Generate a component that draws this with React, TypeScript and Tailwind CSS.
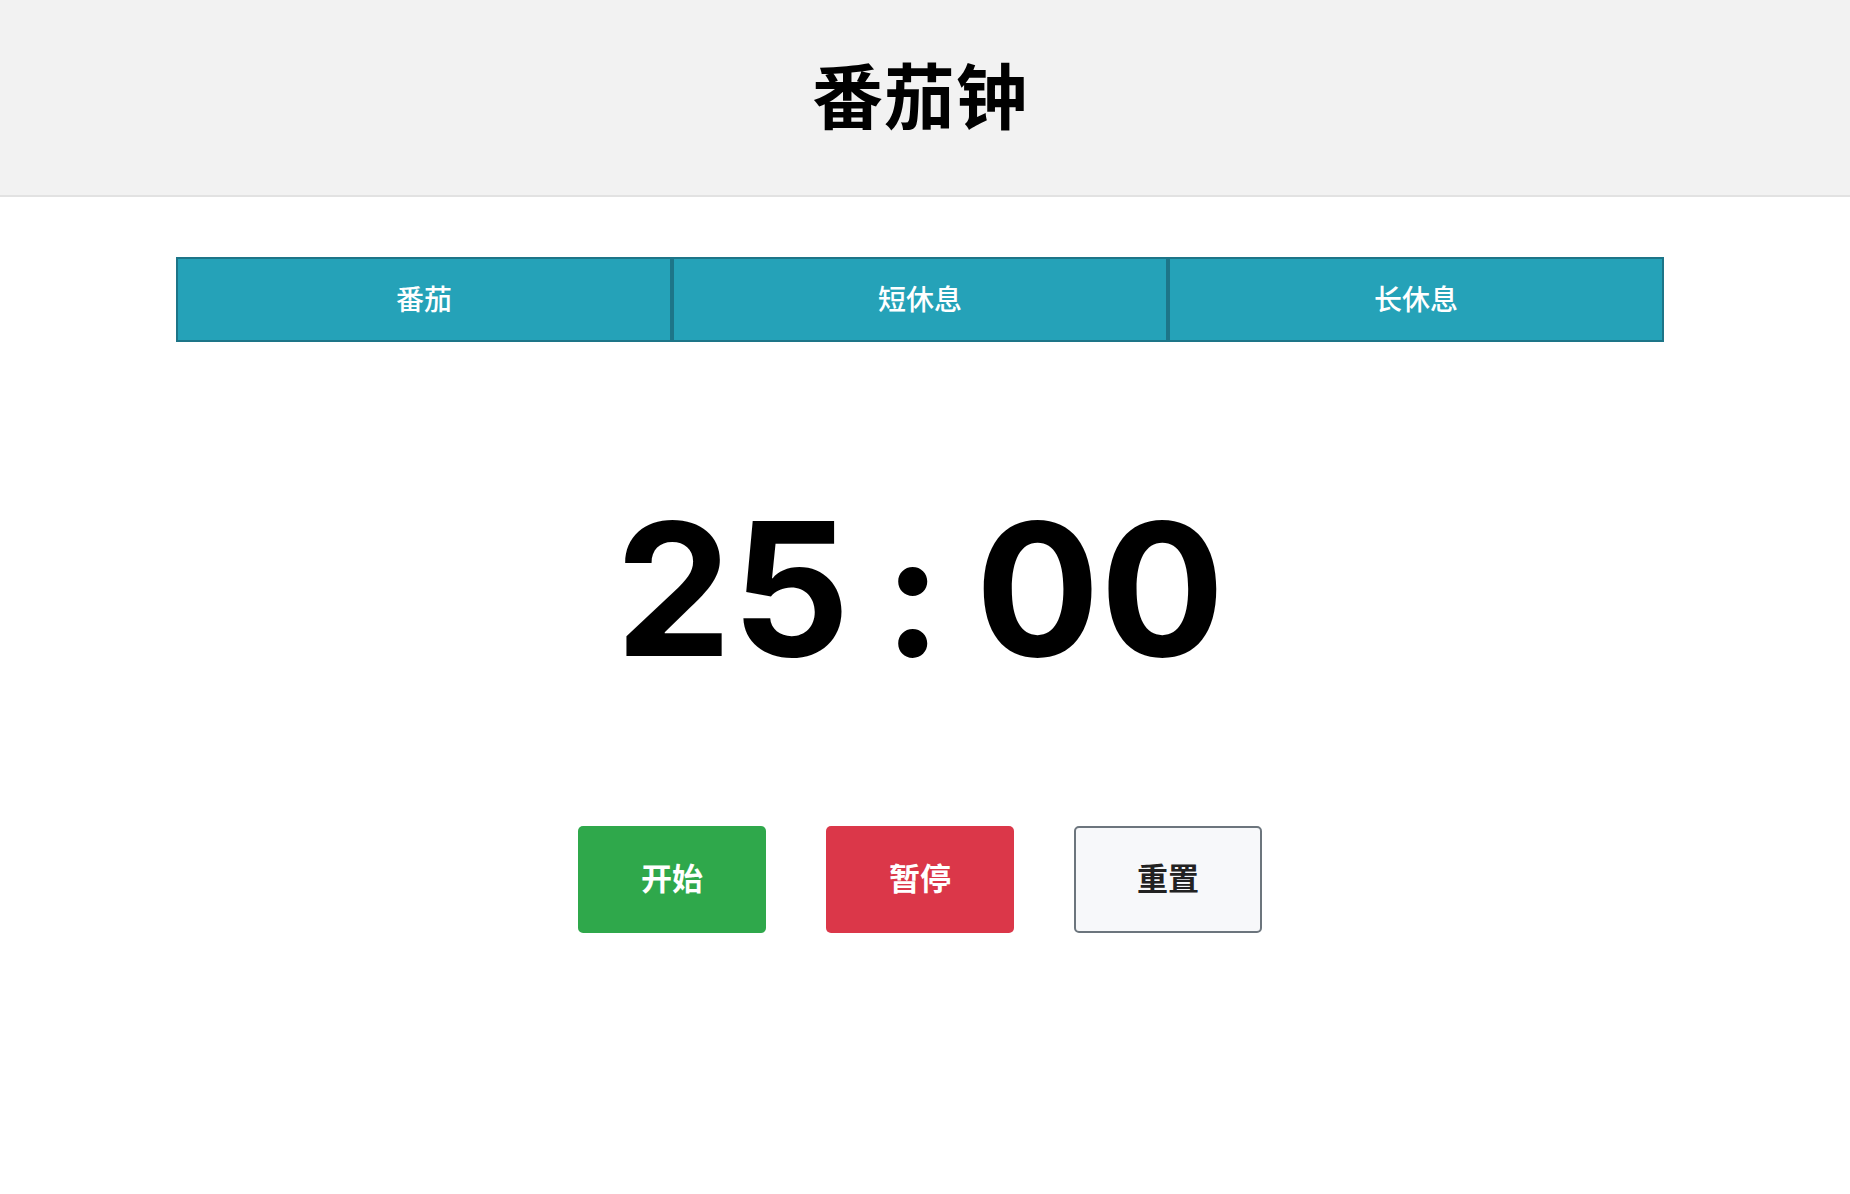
import { useState } from "react"

const modes = [
  { key: "pomodoro", label: "番茄", minutes: 25 },
  { key: "short", label: "短休息", minutes: 5 },
  { key: "long", label: "长休息", minutes: 15 },
]

const cjk = "font-['Inter','Noto_Sans_CJK_SC',sans-serif]"

export default function App() {
  const [seconds, setSeconds] = useState(25 * 60)

  const mm = String(Math.floor(seconds / 60)).padStart(2, "0")
  const ss = String(seconds % 60).padStart(2, "0")

  return (
    <div className={`min-h-screen bg-white text-black ${cjk}`}>
      <header className="h-[197px] bg-[#f2f2f2] border-b-2 border-[#e2e2e2] flex items-center justify-center pr-[10px]">
        <h1 className="text-[71px] font-bold leading-none tracking-[1px]">番茄钟</h1>
      </header>

      <main className="pr-[10px]">
        <div className="mt-[60px] mx-auto w-[1488px] flex">
          {modes.map((m) => (
            <button
              key={m.key}
              onClick={() => setSeconds(m.minutes * 60)}
              className="flex-1 h-[85px] bg-[#25a2b8] border-2 border-[#1d7588] text-white text-[28px] font-medium flex items-center justify-center"
            >
              {m.label}
            </button>
          ))}
        </div>

        <div className="h-[484px] pt-[10px] flex items-center justify-center font-['Inter',sans-serif] font-bold text-[185px] leading-none">
          <span>{mm}</span>
          <span className="mx-[34px] text-[172px] translate-y-[4px]">:</span>
          <span>{ss}</span>
        </div>

        <div className="flex justify-center gap-[60px]">
          <button className="w-[188px] h-[107px] rounded-[5px] bg-[#2fa84b] text-white text-[31px] font-semibold">
            开始
          </button>
          <button className="w-[188px] h-[107px] rounded-[5px] bg-[#db3749] text-white text-[31px] font-semibold">
            暂停
          </button>
          <button
            onClick={() => setSeconds(25 * 60)}
            className="w-[188px] h-[107px] rounded-[5px] bg-[#f7f8fa] border-2 border-[#6c757d] text-[#222] text-[31px] font-semibold"
          >
            重置
          </button>
        </div>
      </main>
    </div>
  )
}
